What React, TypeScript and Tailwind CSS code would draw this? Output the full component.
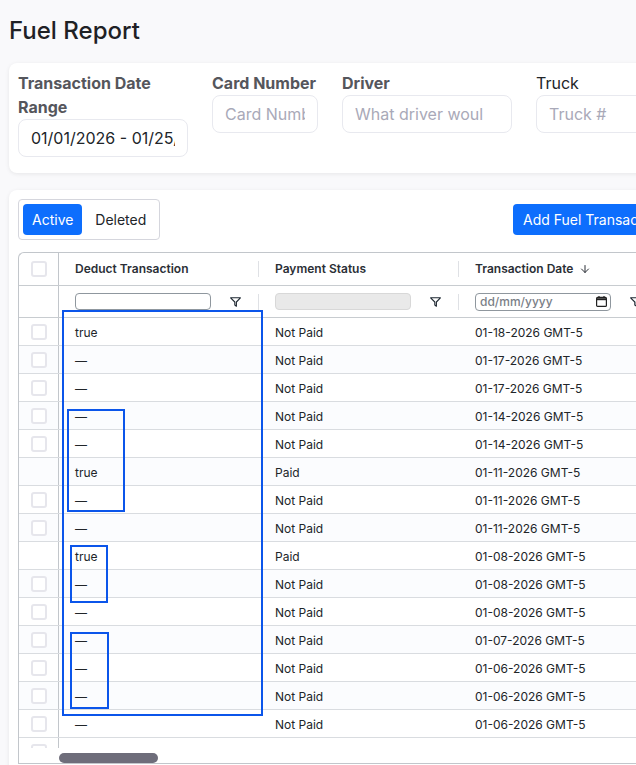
import { ArrowDown } from "lucide-react";

const rows = [
  { deduct: "true", status: "Not Paid", date: "01-18-2026 GMT-5", check: true },
  { deduct: "—", status: "Not Paid", date: "01-17-2026 GMT-5", check: true },
  { deduct: "—", status: "Not Paid", date: "01-17-2026 GMT-5", check: true },
  { deduct: "—", status: "Not Paid", date: "01-14-2026 GMT-5", check: true },
  { deduct: "—", status: "Not Paid", date: "01-14-2026 GMT-5", check: true },
  { deduct: "true", status: "Paid", date: "01-11-2026 GMT-5", check: false },
  { deduct: "—", status: "Not Paid", date: "01-11-2026 GMT-5", check: true },
  { deduct: "—", status: "Not Paid", date: "01-11-2026 GMT-5", check: true },
  { deduct: "true", status: "Paid", date: "01-08-2026 GMT-5", check: false },
  { deduct: "—", status: "Not Paid", date: "01-08-2026 GMT-5", check: true },
  { deduct: "—", status: "Not Paid", date: "01-08-2026 GMT-5", check: true },
  { deduct: "—", status: "Not Paid", date: "01-07-2026 GMT-5", check: true },
  { deduct: "—", status: "Not Paid", date: "01-06-2026 GMT-5", check: true },
  { deduct: "—", status: "Not Paid", date: "01-06-2026 GMT-5", check: true },
  { deduct: "—", status: "Not Paid", date: "01-06-2026 GMT-5", check: true },
];

const FilterIcon = () => (
  <svg width="11" height="10" viewBox="0 0 11 10" fill="none" stroke="#1f2933" strokeWidth="1.1" strokeLinejoin="round">
    <path d="M0.6 0.8H10.4L6.4 5V9.2L4.8 8V5Z" />
  </svg>
);

const CalendarIcon = () => (
  <svg width="11" height="11" viewBox="0 0 11 11" fill="none">
    <rect x="0.6" y="1.4" width="9.8" height="9" rx="1" stroke="#222" strokeWidth="1.2" />
    <path d="M1 3.2H10" stroke="#222" strokeWidth="2" />
    <path d="M3 0V2M8 0V2" stroke="#222" strokeWidth="1.2" />
  </svg>
);

const Checkbox = () => <div className="h-4 w-4 rounded-[3px] border-2 border-[#e6e6ec] bg-white" />;

const Field = ({ label, placeholder, width, value, light, inputClass }: { label: string; placeholder?: string; width: string; value?: string; light?: boolean; inputClass?: string }) => (
  <div className={`flex flex-col ${width}`}>
    <label className={`text-base leading-6 ${light ? "font-normal text-[#212529]" : "font-bold text-[#55565c]"}`}>{label}</label>
    <input
      readOnly
      value={value}
      placeholder={placeholder}
      className={`h-[38px] w-full rounded-lg border border-[#e8e9ef] bg-white px-3 text-base text-[#212529] outline-none placeholder:text-[#a9a9b8] ${inputClass ?? ""}`}
    />
  </div>
);

export default function App() {
  return (
    <div className="relative h-[765px] w-[636px] overflow-hidden bg-[#f9f9fb] font-['Inter',sans-serif] text-[#212529]">
      <h1 className="pl-[9px] pt-[15px] text-2xl leading-8 font-medium text-[#1f2125]">Fuel Report</h1>

      <div className="ml-[9px] mt-4 flex h-[110px] w-[900px] gap-6 rounded-lg bg-white p-[9px] pt-2 shadow-[0_1px_4px_rgba(0,0,0,0.08)]">
        <Field label="Transaction Date Range" width="w-[170px]" value="01/01/2026 - 01/25/2026" />
        <Field label="Card Number" width="w-[106px]" placeholder="Card Number" />
        <Field label="Driver" width="w-[170px]" placeholder="What driver would you like" inputClass="pr-7" />
        <Field label="Truck" width="w-[170px]" placeholder="Truck #" light />
      </div>

      <div className="ml-[9px] mt-[17px] h-[600px] w-[900px] rounded-lg bg-white pl-[9px] pt-[9px] shadow-[0_1px_4px_rgba(0,0,0,0.08)]">
        <div className="flex w-[655px] items-start justify-between">
          <div className="flex h-[41px] w-[142px] items-center rounded border border-[#d5d6dd] pl-1 text-sm">
            <div className="flex h-[31px] w-[59px] items-center justify-center rounded bg-[#0d6efd] pl-px text-white">Active</div>
            <div className="flex h-[31px] w-[78px] items-center justify-center pl-px">Deleted</div>
          </div>
          <div className="mt-[5px] flex h-[31px] w-[160px] shrink-0 items-center whitespace-nowrap rounded bg-[#0d6efd] pl-2.5 text-sm text-white">
            Add Fuel Transaction
          </div>
        </div>

        <div className="mt-3 w-[860px] rounded-tl-md border-l border-t border-[#c2c6cb] text-xs">
          <div className="flex h-[33px] border-b border-[#c8ccd0] font-semibold text-[#2b2f36]">
            <div className="flex w-[40px] shrink-0 items-center justify-center border-r border-[#c2c6cb]"><Checkbox /></div>
            <div className="flex w-[200px] items-center pl-4"><span className="flex-1">Deduct Transaction</span><span className="h-4 w-px bg-[#dfe1e5]" /></div>
            <div className="flex w-[200px] items-center pl-4"><span className="flex-1">Payment Status</span><span className="h-4 w-px bg-[#dfe1e5]" /></div>
            <div className="flex w-[200px] items-center gap-1.5 pl-4">Transaction Date <ArrowDown size={12} strokeWidth={2} /></div>
          </div>

          <div className="flex h-[32px] border-b border-[#c8ccd0]">
            <div className="w-[40px] shrink-0 border-r border-[#c2c6cb]" />
            <div className="flex w-[200px] items-center pl-4">
              <div className="h-[17px] w-[136px] rounded border border-[#8f979e] bg-white" />
              <div className="flex flex-1 justify-center pl-0.5"><FilterIcon /></div>
              <span className="h-4 w-px bg-[#dfe1e5]" />
            </div>
            <div className="flex w-[200px] items-center pl-4">
              <div className="h-[17px] w-[136px] rounded border border-[#d8d8d8] bg-[#e9e9e9]" />
              <div className="flex flex-1 justify-center pl-0.5"><FilterIcon /></div>
              <span className="h-4 w-px bg-[#dfe1e5]" />
            </div>
            <div className="flex w-[200px] items-center pl-4">
              <div className="flex h-[18px] w-[136px] items-center justify-between rounded border border-[#8f979e] bg-white pl-1 pr-[3px] text-[#7b7f87]">
                <span className="pt-px font-medium">dd/mm/yyyy</span>
                <CalendarIcon />
              </div>
              <div className="flex flex-1 justify-center"><FilterIcon /></div>
            </div>
          </div>

          {rows.map((row, i) => (
            <div key={i} className={`flex h-[28px] items-center border-b border-[#d9dce0] ${i % 2 === 1 ? "bg-[#fbfcfe]" : "bg-white"}`}>
              <div className="flex h-full w-[40px] shrink-0 items-center justify-center border-r border-[#c2c6cb]">
                {row.check && <Checkbox />}
              </div>
              <div className="w-[200px] pl-4 pt-0.5">{row.deduct}</div>
              <div className="w-[200px] pl-4 pt-0.5">{row.status}</div>
              <div className="w-[200px] pl-4 pt-0.5">{row.date}</div>
            </div>
          ))}

          <div className="flex h-[10px] overflow-hidden">
            <div className="flex w-[40px] shrink-0 justify-center border-r border-[#c2c6cb] pt-[6px]"><Checkbox /></div>
          </div>

          <div className="flex h-[16px] border-b border-[#c2c6cb] pl-[40px] pt-[5px]">
            <div className="h-2.5 w-[99px] rounded-full bg-[#6e6d7a]" />
          </div>
        </div>
      </div>

      {/* annotation boxes drawn over the screenshot */}
      <div className="absolute left-[62px] top-[310px] h-[406px] w-[201px] border-2 border-[#0b55ea]" />
      <div className="absolute left-[67px] top-[409px] h-[103px] w-[58px] border-2 border-[#0b55ea]" />
      <div className="absolute left-[70px] top-[545px] h-[58px] w-[38px] border-2 border-[#0b55ea]" />
      <div className="absolute left-[70px] top-[632px] h-[77px] w-[39px] border-2 border-[#0b55ea]" />
    </div>
  );
}
